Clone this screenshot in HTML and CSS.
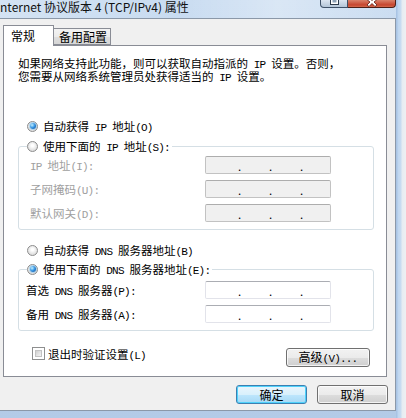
FILE: index.html
```html
<!DOCTYPE html>
<html lang="zh-CN">
<head>
<meta charset="utf-8">
<title>Internet 协议版本 4 (TCP/IPv4) 属性</title>
<link rel="stylesheet" href="styles.css">
</head>
<body>
<div class="screen">
  <div class="main">
    <div class="titlebar">
      <span class="title">nternet 协议版本 4 (TCP/IPv4) 属性</span>
      <div class="controls">
        <span class="ctl max"><svg width="11" height="7" viewBox="0 0 11 7"><rect x="1.5" y="-3.5" width="8" height="8" fill="#fff" stroke="#2c3a4b"/><rect x="3.5" y="-1" width="4" height="3.5" fill="#8fa3b8"/></svg></span>
        <span class="ctl close"><svg width="16" height="7" viewBox="0 0 16 7"><path d="M3 -4 L8 0.5 L13 -4 L15 -2 L10 2 L13 5 L11 6.5 L8 3.5 L5 6.5 L3 5 L6 2 L1 -2 Z" fill="#fff" stroke="#5b1d12" stroke-width="0.8"/></svg></span>
      </div>
    </div>
    <div class="dialog">
      <div class="tabs">
        <div class="tab active">常规</div>
        <div class="tab">备用配置</div>
      </div>
      <div class="panel">
        <p class="intro">如果网络支持此功能，则可以获取自动指派的<span class="m"> IP </span>设置。否则，<br>您需要从网络系统管理员处获得适当的<span class="m"> IP </span>设置。</p>

        <div class="option first"><span class="radio checked"></span><span>自动获得<span class="m"> IP </span>地址<span class="m">(O)</span></span></div>

        <fieldset class="group ip">
          <legend><span class="option"><span class="radio"></span><span>使用下面的<span class="m"> IP </span>地址<span class="m">(S):</span></span></span></legend>
          <div class="row disabled"><span class="label"><span class="m">IP </span>地址<span class="m">(I):</span></span><span class="ipbox"><i>.</i><i>.</i><i>.</i></span></div>
          <div class="row disabled"><span class="label">子网掩码<span class="m">(U):</span></span><span class="ipbox"><i>.</i><i>.</i><i>.</i></span></div>
          <div class="row disabled"><span class="label">默认网关<span class="m">(D):</span></span><span class="ipbox"><i>.</i><i>.</i><i>.</i></span></div>
        </fieldset>

        <div class="option dnsauto"><span class="radio"></span><span>自动获得<span class="m"> DNS </span>服务器地址<span class="m">(B)</span></span></div>

        <fieldset class="group dns">
          <legend><span class="option"><span class="radio checked"></span><span>使用下面的<span class="m"> DNS </span>服务器地址<span class="m">(E):</span></span></span></legend>
          <div class="row"><span class="label">首选<span class="m"> DNS </span>服务器<span class="m">(P):</span></span><span class="ipbox"><i>.</i><i>.</i><i>.</i></span></div>
          <div class="row"><span class="label">备用<span class="m"> DNS </span>服务器<span class="m">(A):</span></span><span class="ipbox"><i>.</i><i>.</i><i>.</i></span></div>
        </fieldset>

        <div class="bottomrow">
          <div class="check"><span class="checkbox"></span><span>退出时验证设置<span class="m">(L)</span></span></div>
          <button class="btn adv">高级<span class="m">(V)...</span></button>
        </div>
      </div>
      <div class="footer">
        <button class="btn default">确定</button>
        <button class="btn">取消</button>
      </div>
    </div>
  </div>
  <div class="frame-right"></div>
</div>
</body>
</html>
```

FILE: styles.css
```css
* { box-sizing: border-box; }
html, body { margin: 0; padding: 0; }
body {
  width: 406px;
  height: 418px;
  overflow: hidden;
  font-family: "Noto Sans CJK SC", "Noto Sans", sans-serif;
  font-size: 11.5px;
  color: #000;
}
.m {
  font-family: "Liberation Mono", "DejaVu Sans Mono", monospace;
  font-size: 11px;
  letter-spacing: -0.8px;
  white-space: pre;
}
.screen {
  display: flex;
  width: 406px;
  height: 418px;
  background: linear-gradient(180deg, #c6daf0 0%, #bcd3ec 50%, #b3cbe7 100%);
}
.main {
  width: 396px;
  display: flex;
  flex-direction: column;
}
.frame-right {
  flex: 1;
  background: linear-gradient(90deg, #a9c4e4 0, #a9c4e4 1px, #bed6f0 2px, #c9dcf1 5px, #e6ecf2 6px, #eef0f2 100%);
}
.titlebar {
  height: 18px;
  display: flex;
  justify-content: space-between;
  align-items: flex-start;
  background: linear-gradient(90deg, rgba(255,255,255,0.25) 0%, rgba(255,255,255,0.05) 45%, rgba(255,255,255,0.35) 70%, rgba(255,255,255,0.1) 100%);
}
.title {
  font-size: 12px;
  line-height: 15px;
  margin-top: -1px;
  color: #111;
  white-space: nowrap;
}
.controls { display: flex; }
.ctl {
  height: 8px;
  display: flex;
  justify-content: center;
  align-items: flex-start;
  overflow: hidden;
}
.ctl.max {
  width: 28px;
  border: 1px solid #3f5168;
  border-top: 0;
  border-radius: 0 0 0 4px;
  background: linear-gradient(#dbe5f0, #b4c5d8);
}
.ctl.close {
  width: 48px;
  border: 1px solid #4f1f16;
  border-top: 0;
  border-left: 0;
  border-radius: 0 0 4px 0;
  background: linear-gradient(#d9826b, #c6452e 70%, #d4694c);
}
.dialog {
  height: 393px;
  background: #f0f0f0;
  border: 1px solid #8b98a8;
  border-left: 0;
  display: flex;
  flex-direction: column;
}
.tabs {
  display: flex;
  align-items: flex-end;
  margin: 6px 0 -1px 3px;
  height: 21px;
  position: relative;
  z-index: 1;
}
.tab {
  border: 1px solid #898c95;
  font-size: 12px;
  display: flex;
  align-items: center;
}
.tab.active {
  width: 51px;
  height: 21px;
  background: #fff;
  border-bottom: 0;
  padding: 0 0 2px 7px;
}
.tab:not(.active) {
  width: 57px;
  height: 17px;
  border-left: 0;
  background: linear-gradient(#f3f3f3 0%, #ebebeb 50%, #dedede 51%, #d6d6d6 100%);
  padding: 0 0 0 5px;
  margin-bottom: 1px;
}
.panel {
  margin-left: 3px;
  width: 384px;
  height: 332px;
  background: #fff;
  border: 1px solid #898c95;
  display: flex;
  flex-direction: column;
}
.intro {
  margin: 12px 0 0 14px;
  line-height: 11px;
  white-space: nowrap;
}
.option {
  display: flex;
  align-items: center;
  height: 14px;
  white-space: nowrap;
}
.option.first { margin: 35px 0 0 23px; }
.option.dnsauto { margin: 13px 0 0 23px; }
.radio {
  flex: none;
  width: 11px;
  height: 11px;
  margin-right: 5px;
  border-radius: 50%;
  border: 1px solid #8c8c8c;
  background: radial-gradient(circle at 50% 40%, #ffffff 15%, #e4e4e4 60%, #cfcfcf 100%);
  display: flex;
  align-items: center;
  justify-content: center;
}
.radio.checked::after {
  content: "";
  width: 6px;
  height: 6px;
  border-radius: 50%;
  background: radial-gradient(circle at 35% 35%, #c2f0ff 0%, #2f8fe0 50%, #0d4a8e 100%);
  box-shadow: 0 0 0 1px rgba(120,190,240,0.5);
}
.group {
  margin: 6px 12px 0 14px;
  padding: 3px 0 7px 0;
  border: 1px solid #d5dfe5;
  border-radius: 3px;
  min-width: 0;
}
.group.dns { margin-top: 5px; padding-top: 5px; }
.group legend {
  margin-left: 8px;
  padding: 0 2px 0 0;
}
.row {
  display: flex;
  align-items: center;
  height: 18px;
  white-space: nowrap;
}
.row + .row { margin-top: 6px; }
.label { flex: none; }
.ip .label { margin-left: 11px; width: 175px; }
.dns .label { margin-left: 7px; width: 179px; }
.row.disabled .label { color: #a0a0a0; }
.ipbox {
  width: 126px;
  height: 18px;
  border: 1px solid #e2e3ea;
  border-top-color: #abadb3;
  border-radius: 2px;
  background: #fff;
  display: flex;
  align-items: flex-end;
  padding: 0 0 1px 32px;
  line-height: 12px;
}
.row.disabled .ipbox {
  background: #f0f0f0;
  border-color: #c2c2c2;
  border-top-color: #adadad;
}
.ipbox i {
  font-style: normal;
  width: 31px;
  flex: none;
}
.bottomrow {
  display: flex;
  justify-content: space-between;
  align-items: flex-start;
  margin: 16px 16px 0 28px;
}
.check {
  display: flex;
  align-items: center;
  height: 13px;
  white-space: nowrap;
}
.checkbox {
  flex: none;
  width: 13px;
  height: 13px;
  margin-right: 3px;
  border: 1px solid #8e8f8f;
  padding: 2px;
  background: #fff;
  display: flex;
}
.checkbox::after {
  content: "";
  flex: 1;
  border: 1px solid #c3c3c3;
  background: linear-gradient(135deg, #cfcfcf, #f4f4f4);
}
.btn {
  font-family: "Noto Sans CJK SC", "Noto Sans", sans-serif;
  font-size: 12px;
  color: #000;
  height: 19px;
  padding: 0;
  line-height: 15px;
  border: 1px solid #707070;
  border-radius: 3px;
  background: linear-gradient(#f2f2f2 0%, #ebebeb 50%, #dddddd 51%, #cfcfcf 100%);
  box-shadow: inset 0 0 0 1px rgba(255,255,255,0.75);
}
.btn.adv { width: 84px; margin-top: 1px; }
.footer {
  display: flex;
  justify-content: flex-end;
  gap: 10px;
  margin: 8px 7px 0 0;
}
.footer .btn { width: 71px; }
.btn.default {
  border-color: #3c7fb1;
  background: linear-gradient(#eaf6fd 0%, #d9f0fc 50%, #bee6fd 51%, #a7d9f5 100%);
  box-shadow: inset 0 0 0 1px #4fd2fb;
}
```
